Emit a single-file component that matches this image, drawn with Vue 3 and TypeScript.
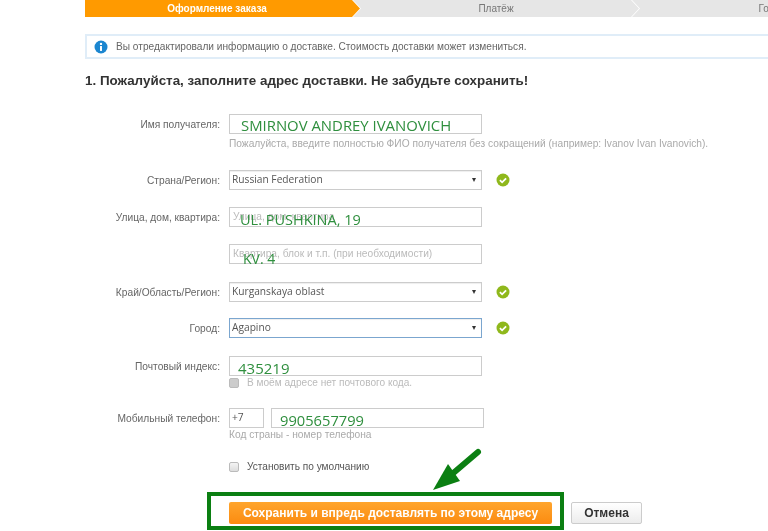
<script setup lang="ts">
const steps = [
  { label: 'Оформление заказа', cls: 'active' },
  { label: 'Платёж', cls: 'mid' },
  { label: 'Готово', cls: 'last' }
]
</script>

<template>
  <div class="page">
    <div class="stepper">
      <div v-for="s in steps" :key="s.label" class="step" :class="s.cls">{{ s.label }}</div>
    </div>

    <div class="notice">
      <svg class="info" width="14" height="14" viewBox="0 0 14 14">
        <circle cx="7" cy="7" r="6.5" fill="#1b86d0" />
        <circle cx="7" cy="3.9" r="1.2" fill="#fff" />
        <rect x="6" y="5.9" width="2" height="5" rx=".4" fill="#fff" />
      </svg>
      <span>Вы отредактировали информацию о доставке. Стоимость доставки может измениться.</span>
    </div>

    <h2 class="title">1. Пожалуйста, заполните адрес доставки. Не забудьте сохранить!</h2>

    <form class="form" @submit.prevent>
      <div class="row name-row">
        <label>Имя получателя:</label>
        <div class="box wide"><span class="ink ink-name">SMIRNOV ANDREY IVANOVICH</span></div>
      </div>
      <div class="hint hint-name">Пожалуйста, введите полностью ФИО получателя без сокращений (например: Ivanov Ivan Ivanovich).</div>

      <div class="row country-row">
        <label>Страна/Регион:</label>
        <div class="box wide select">Russian Federation<i class="caret"></i></div>
        <svg class="ok" width="14" height="14" viewBox="0 0 14 14"><circle cx="7" cy="7" r="6.5" fill="#8fb81c" /><path d="M3.9 7.2l2.2 2.1 4-4" fill="none" stroke="#fff" stroke-width="1.8" /></svg>
      </div>

      <div class="row street-row">
        <label>Улица, дом, квартира:</label>
        <div class="box wide ph">Улица, дом, квартира<span class="ink ink-street">UL. PUSHKINA, 19</span></div>
      </div>

      <div class="row apt-row">
        <label></label>
        <div class="box wide ph">Квартира, блок и т.п. (при необходимости)<span class="ink ink-apt">KV. 4</span></div>
      </div>

      <div class="row region-row">
        <label>Край/Область/Регион:</label>
        <div class="box wide select">Kurganskaya oblast<i class="caret"></i></div>
        <svg class="ok" width="14" height="14" viewBox="0 0 14 14"><circle cx="7" cy="7" r="6.5" fill="#8fb81c" /><path d="M3.9 7.2l2.2 2.1 4-4" fill="none" stroke="#fff" stroke-width="1.8" /></svg>
      </div>

      <div class="row city-row">
        <label>Город:</label>
        <div class="box wide select focus">Agapino<i class="caret"></i></div>
        <svg class="ok" width="14" height="14" viewBox="0 0 14 14"><circle cx="7" cy="7" r="6.5" fill="#8fb81c" /><path d="M3.9 7.2l2.2 2.1 4-4" fill="none" stroke="#fff" stroke-width="1.8" /></svg>
      </div>

      <div class="row zip-row">
        <label>Почтовый индекс:</label>
        <div class="box wide"><span class="ink ink-zip">435219</span></div>
      </div>
      <div class="check check-zip"><i class="tick disabled"></i><span>В моём адресе нет почтового кода.</span></div>

      <div class="row phone-row">
        <label>Мобильный телефон:</label>
        <div class="box code">+7</div>
        <div class="box number"><span class="ink ink-phone">9905657799</span></div>
      </div>
      <div class="hint hint-phone">Код страны - номер телефона</div>

      <div class="check check-default"><i class="tick"></i><span>Установить по умолчанию</span></div>

      <div class="actions">
        <button type="button" class="save">Сохранить и впредь доставлять по этому адресу</button>
        <button type="button" class="cancel">Отмена</button>
      </div>
    </form>

    <div class="frame"></div>
    <svg class="arrow" width="60" height="50" viewBox="0 0 60 50">
      <path d="M47 7 L20 30" stroke="#0b7f12" stroke-width="6" stroke-linecap="round" fill="none" />
      <path d="M2 45 L17 19 L29 36 Z" fill="#0b7f12" />
    </svg>
  </div>
</template>

<style scoped>
.page {
  position: relative;
  width: 768px;
  height: 531px;
  overflow: hidden;
  padding-left: 85px;
  box-sizing: border-box;
  background: #fff;
  font-family: "Liberation Sans", Arial, sans-serif;
  font-size: 10px;
  color: #666;
  filter: blur(0.3px);
}
.stepper {
  display: flex;
  height: 17px;
  width: 720px;
}
.step {
  flex: none;
  line-height: 17px;
  font-size: 10px;
  text-align: center;
  color: #777;
  background: #e6e6e6;
  box-sizing: border-box;
}
.active {
  width: 275px;
  background: #ff9a00;
  color: #fff;
  font-weight: bold;
  padding-right: 11px;
  clip-path: polygon(0 0, calc(100% - 8px) 0, 100% 50%, calc(100% - 8px) 100%, 0 100%);
}
.mid {
  width: 286px;
  margin-left: -7px;
  clip-path: polygon(0 0, calc(100% - 8px) 0, 100% 50%, calc(100% - 8px) 100%, 0 100%, 8px 50%);
}
.last {
  width: 284px;
  margin-left: -7px;
  clip-path: polygon(0 0, 100% 0, 100% 100%, 0 100%, 8px 50%);
}
.notice {
  display: flex;
  align-items: center;
  gap: 8px;
  width: 700px;
  height: 25px;
  margin-top: 17px;
  padding-left: 7px;
  box-sizing: border-box;
  border: 2px solid #e0edf8;
  font-size: 10.15px;
  color: #666;
  white-space: nowrap;
}
.info { flex: none; }
.title {
  margin: 13px 0 0;
  font-size: 13.4px;
  line-height: 17px;
  font-weight: bold;
  color: #333;
  white-space: nowrap;
}
.form {
  margin-top: 25px;
}
.row {
  display: flex;
  align-items: center;
  height: 20px;
}
.row label {
  flex: none;
  width: 135px;
  margin-right: 9px;
  text-align: right;
  font-size: 10.2px;
  color: #666;
  white-space: nowrap;
}
.box {
  position: relative;
  flex: none;
  height: 20px;
  box-sizing: border-box;
  border: 1px solid #ccc;
  padding: 0 2px;
  line-height: 17px;
  font-family: "Open Sans", sans-serif;
  font-size: 10.2px;
  color: #555;
  white-space: nowrap;
}
.wide { width: 253px; }
.select { box-shadow: inset 0 1px 1px #eee; }
.focus { border-color: #7ba6cf; }
.ph { font-family: "Liberation Sans", sans-serif; font-size: 10.2px; color: #bbb; padding-left: 3px; }
.caret {
  position: absolute;
  right: 5px;
  top: 7px;
  border-left: 2.5px solid transparent;
  border-right: 2.5px solid transparent;
  border-top: 4px solid #333;
}
.ok { margin-left: 14px; flex: none; }
.code { width: 35px; line-height: 17px; }
.number { width: 213px; margin-left: 7px; }
.ink {
  position: absolute;
  font-family: "Open Sans", sans-serif;
  color: #2f8f3e;
  white-space: nowrap;
  line-height: 1;
}
.ink-name { left: 11px; top: 3px; font-size: 14.9px; }
.ink-street { left: 10px; top: 5px; font-size: 14.5px; }
.ink-apt { left: 13px; top: 7px; font-size: 14px; }
.ink-zip { left: 8px; top: 4px; font-size: 15px; }
.ink-phone { left: 8px; top: 4px; font-size: 14.7px; }
.hint {
  margin-left: 144px;
  font-size: 10.2px;
  line-height: 12px;
  color: #aaa;
  white-space: nowrap;
}
.hint-name { margin-top: 4px; }
.country-row { margin-top: 20px; }
.street-row { margin-top: 17px; }
.apt-row { margin-top: 17px; }
.region-row { margin-top: 18px; }
.city-row { margin-top: 16px; }
.zip-row { margin-top: 18px; }
.check {
  display: flex;
  align-items: center;
  margin-left: 144px;
  gap: 8px;
  font-size: 10.1px;
  line-height: 12px;
}
.check-zip { margin-top: 1px; color: #bbb; }
.phone-row { margin-top: 19px; }
.hint-phone { margin-top: 1px; }
.check-default { margin-top: 20px; color: #555; }
.tick {
  flex: none;
  width: 10px;
  height: 10px;
  box-sizing: border-box;
  border: 1px solid #bbb;
  border-radius: 2px;
  background: linear-gradient(#f4f4f4, #ddd);
}
.tick.disabled { background: #ccc; }
.actions {
  display: flex;
  gap: 19px;
  margin-top: 29px;
  margin-left: 144px;
}
button {
  height: 22px;
  padding: 0;
  font-family: "Liberation Sans", sans-serif;
  font-weight: bold;
  font-size: 12px;
  border-radius: 2px;
  cursor: pointer;
}
.save {
  width: 323px;
  border: 0;
  background: linear-gradient(#ffa52d, #fb8b10);
  color: #fff;
}
.cancel {
  width: 71px;
  border: 1px solid #ccc;
  background: linear-gradient(#fff, #ececec);
  color: #333;
}
.frame {
  position: absolute;
  left: 207px;
  top: 492px;
  width: 357px;
  height: 38px;
  box-sizing: border-box;
  border: 4px solid #0b7f12;
}
.arrow {
  position: absolute;
  left: 431px;
  top: 445px;
}
</style>
